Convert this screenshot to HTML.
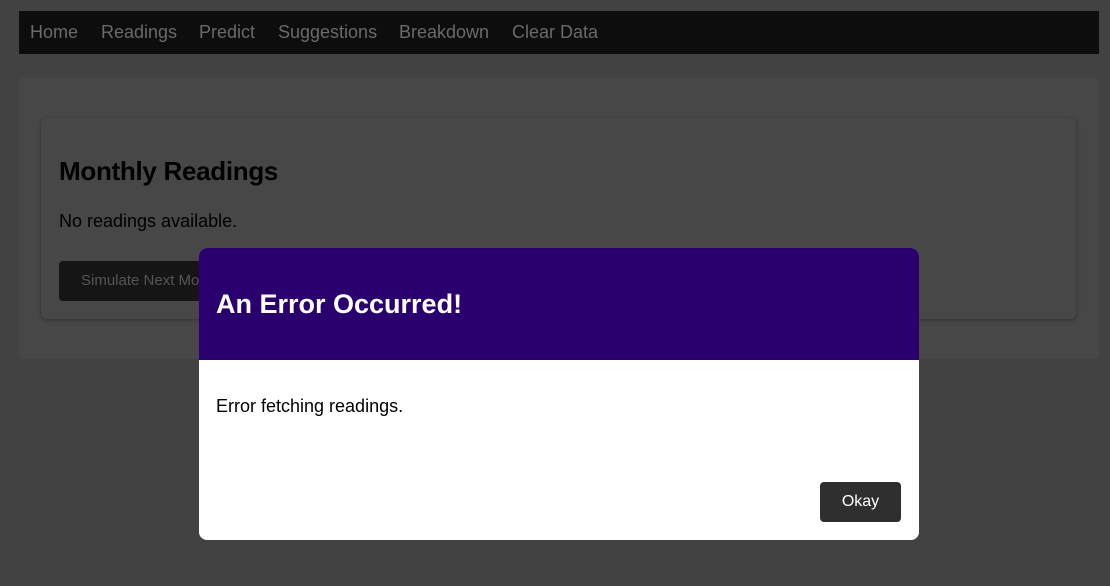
<!DOCTYPE html>
<html><head><style>
body{margin:0;width:1110px;height:586px;background:#424242;font-family:"Liberation Sans",Arial,sans-serif;position:relative;overflow:hidden}
.nav{position:absolute;left:19px;top:11px;width:1080px;height:43px;background:#0d0d0d}
.nav span{position:absolute;top:11px;font-size:18px;color:#6a6a6a}
.outer{position:absolute;left:19px;top:78px;width:1080px;height:281px;background:#474747;border-radius:4px}
.card{position:absolute;left:41px;top:118px;width:1035px;height:201px;background:#474747;border-radius:6px;box-shadow:0 1px 4px rgba(0,0,0,.3)}
h2{position:absolute;left:59px;top:156px;margin:0;font-size:26px;color:#000;letter-spacing:-0.3px}
.p{position:absolute;left:59px;top:211px;font-size:18px;color:#000}
.btn{position:absolute;left:59px;top:261px;width:160px;height:40px;background:#151515;border-radius:4px;color:#555;font-size:15px;line-height:40px;padding-left:22px;box-sizing:border-box;white-space:nowrap;overflow:hidden}
.modal{position:absolute;left:199px;top:248px;width:720px;height:292px;background:#fff;border-radius:8px;overflow:hidden}
.mh{height:112px;background:#2a006e;color:#fff;font-weight:bold;font-size:27px;padding-left:17px;line-height:112px}
.mb{position:absolute;left:17px;top:148px;font-size:18px;color:#000}
.ok{position:absolute;left:621px;top:234px;width:81px;height:40px;background:#2f2f2f;color:#fff;border-radius:4px;font-size:16px;text-align:center;line-height:40px}
</style></head><body>
<div class="nav"><span style="left:11px">Home</span><span style="left:82px">Readings</span><span style="left:180px">Predict</span><span style="left:259px">Suggestions</span><span style="left:380px">Breakdown</span><span style="left:493px">Clear Data</span></div>
<div class="outer"></div><div class="card"></div>
<h2>Monthly Readings</h2>
<div class="p">No readings available.</div>
<div class="btn">Simulate Next Month</div>
<div class="modal"><div class="mh">An Error Occurred!</div><div class="mb">Error fetching readings.</div><div class="ok">Okay</div></div>
</body></html>
